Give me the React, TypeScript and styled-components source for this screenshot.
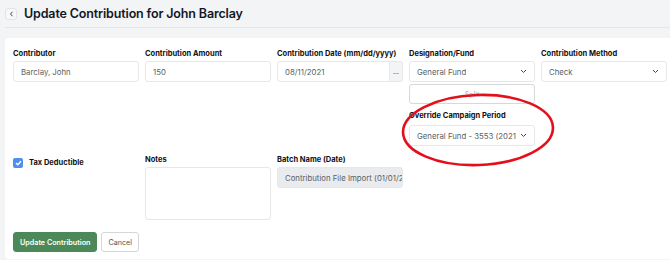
import styled, { createGlobalStyle } from "styled-components";

const GlobalStyle = createGlobalStyle`
  html, body {
    margin: 0;
    padding: 0;
    background: #f3f4f6;
    font-family: Inter, "Noto Sans", sans-serif;
    overflow: hidden;
  }
`;

const Page = styled.div`
  padding-left: 5px;
  width: 680px;
`;

const Header = styled.div`
  display: flex;
  align-items: center;
  gap: 7px;
  height: 27px;
  border-bottom: 1px solid #e4e6ea;
`;

const BackButton = styled.button`
  display: flex;
  align-items: center;
  justify-content: center;
  width: 12px;
  height: 12px;
  padding: 0;
  border: 1px solid #e2e4e8;
  border-radius: 3px;
  background: #f7f8fa;
  color: #444;
`;

const Title = styled.h1`
  margin: 0;
  font-size: 12.5px;
  font-weight: 600;
  color: #111827;
  letter-spacing: -0.15px;
`;

const Card = styled.div`
  position: relative;
  margin-top: 10px;
  width: 671px;
  box-sizing: border-box;
  background: #fff;
  border-radius: 4px;
  padding: 11px 8px 7px 8px;
`;

const Grid = styled.div`
  display: grid;
  grid-template-columns: repeat(5, 126px);
  column-gap: 6px;
  row-gap: 9px;
  align-items: start;
`;

const Field = styled.div<{ $pad?: number }>`
  display: flex;
  flex-direction: column;
  gap: 2px;
  padding-top: ${(p) => p.$pad ?? 0}px;
`;

const Label = styled.label`
  font-size: 7.5px;
  font-weight: 700;
  color: #111;
  line-height: 10px;
  white-space: nowrap;
`;

const SubLabel = styled(Label)`
  margin: 5px 0 2px;
`;

const Input = styled.div<{ $disabled?: boolean }>`
  display: flex;
  align-items: center;
  height: 21px;
  box-sizing: border-box;
  border: 1px solid #e5e7eb;
  border-radius: 3px;
  padding: 0 ${(p) => (p.$disabled ? "1px" : "7px")} 0 7px;
  font-size: 7.8px;
  color: #595f66;
  background: ${(p) => (p.$disabled ? "#eaebee" : "#fff")};
  white-space: nowrap;
  overflow: hidden;
`;

const Group = styled.div`
  display: flex;
`;

const GroupInput = styled(Input)`
  flex: 1;
  border-radius: 3px 0 0 3px;
`;

const Addon = styled.div`
  width: 13px;
  height: 21px;
  box-sizing: border-box;
  border: 1px solid #e5e7eb;
  border-left: none;
  border-radius: 0 3px 3px 0;
  background: #f3f4f6;
  font-size: 7px;
  color: #444;
  display: flex;
  align-items: center;
  justify-content: center;
`;

const Select = styled(Input)`
  justify-content: space-between;
  padding-right: 7px;
  gap: 4px;

  span {
    overflow: hidden;
  }
  svg {
    flex: none;
  }
`;

const SplitButton = styled.button`
  height: 20px;
  border: 1px solid #d6d8dc;
  border-radius: 3px;
  background: #fff;
  font-family: inherit;
  font-size: 7px;
  color: #a0a4aa;
`;

const CheckRow = styled.div`
  display: flex;
  align-items: center;
  gap: 6px;
`;

const Box = styled.span`
  width: 10px;
  height: 10px;
  border-radius: 2px;
  background: #4f8ff2;
  display: flex;
  align-items: center;
  justify-content: center;
`;

const TextArea = styled.div`
  height: 51px;
  border: 1px solid #e5e7eb;
  border-radius: 3px;
  background: #fff;
`;

const Actions = styled.div`
  display: flex;
  gap: 4px;
  margin-top: 12px;
`;

const Button = styled.button<{ $primary?: boolean }>`
  height: 20px;
  padding: 0 ${(p) => (p.$primary ? "6px" : "6px")};
  border-radius: 3px;
  font-family: inherit;
  font-size: 7.2px;
  font-weight: ${(p) => (p.$primary ? 600 : 400)};
  color: ${(p) => (p.$primary ? "#fff" : "#555")};
  background: ${(p) => (p.$primary ? "#4b8a58" : "#fff")};
  border: 1px solid ${(p) => (p.$primary ? "#4b8a58" : "#d4d6da")};
`;

const Circle = styled.svg`
  position: absolute;
  left: 390px;
  top: 52px;
  pointer-events: none;
`;

const Chevron = () => (
  <svg width="7" height="5" viewBox="0 0 7 5">
    <path d="M1 1l2.5 2.5L6 1" stroke="#444" strokeWidth="1" fill="none" />
  </svg>
);

const App = () => {
  return (
    <Page>
      <GlobalStyle />
      <Header>
        <BackButton>
          <svg width="5" height="6" viewBox="0 0 5 6">
            <path d="M3.5 0.8L1.5 3l2 2.2" stroke="#444" strokeWidth="1" fill="none" />
          </svg>
        </BackButton>
        <Title>Update Contribution for John Barclay</Title>
      </Header>
      <Card>
        <Grid>
          <Field>
            <Label>Contributor</Label>
            <Input>Barclay, John</Input>
          </Field>
          <Field>
            <Label>Contribution Amount</Label>
            <Input>150</Input>
          </Field>
          <Field>
            <Label>Contribution Date (mm/dd/yyyy)</Label>
            <Group>
              <GroupInput>08/11/2021</GroupInput>
              <Addon>...</Addon>
            </Group>
          </Field>
          <Field>
            <Label>Designation/Fund</Label>
            <Select>
              <span>General Fund</span>
              <Chevron />
            </Select>
            <SplitButton>Split</SplitButton>
            <SubLabel>Override Campaign Period</SubLabel>
            <Select>
              <span>General Fund - 3553 (2021)</span>
              <Chevron />
            </Select>
          </Field>
          <Field>
            <Label>Contribution Method</Label>
            <Select>
              <span>Check</span>
              <Chevron />
            </Select>
          </Field>

          <Field $pad={3}>
            <CheckRow>
              <Box>
                <svg width="7" height="6" viewBox="0 0 7 6">
                  <path d="M1 3l1.8 1.8L6 1.2" stroke="#fff" strokeWidth="1.3" fill="none" />
                </svg>
              </Box>
              <Label>Tax Deductible</Label>
            </CheckRow>
          </Field>
          <Field>
            <Label>Notes</Label>
            <TextArea />
          </Field>
          <Field>
            <Label>Batch Name (Date)</Label>
            <Input $disabled>Contribution File Import (01/01/2021)</Input>
          </Field>
        </Grid>
        <Actions>
          <Button $primary>Update Contribution</Button>
          <Button>Cancel</Button>
        </Actions>
        <Circle width="170" height="80" viewBox="0 0 170 80">
          <ellipse
            cx="83"
            cy="40"
            rx="75"
            ry="35"
            transform="rotate(-2 83 40)"
            stroke="#e3101b"
            strokeWidth="2.6"
            fill="none"
          />
        </Circle>
      </Card>
    </Page>
  );
};

export default App;
